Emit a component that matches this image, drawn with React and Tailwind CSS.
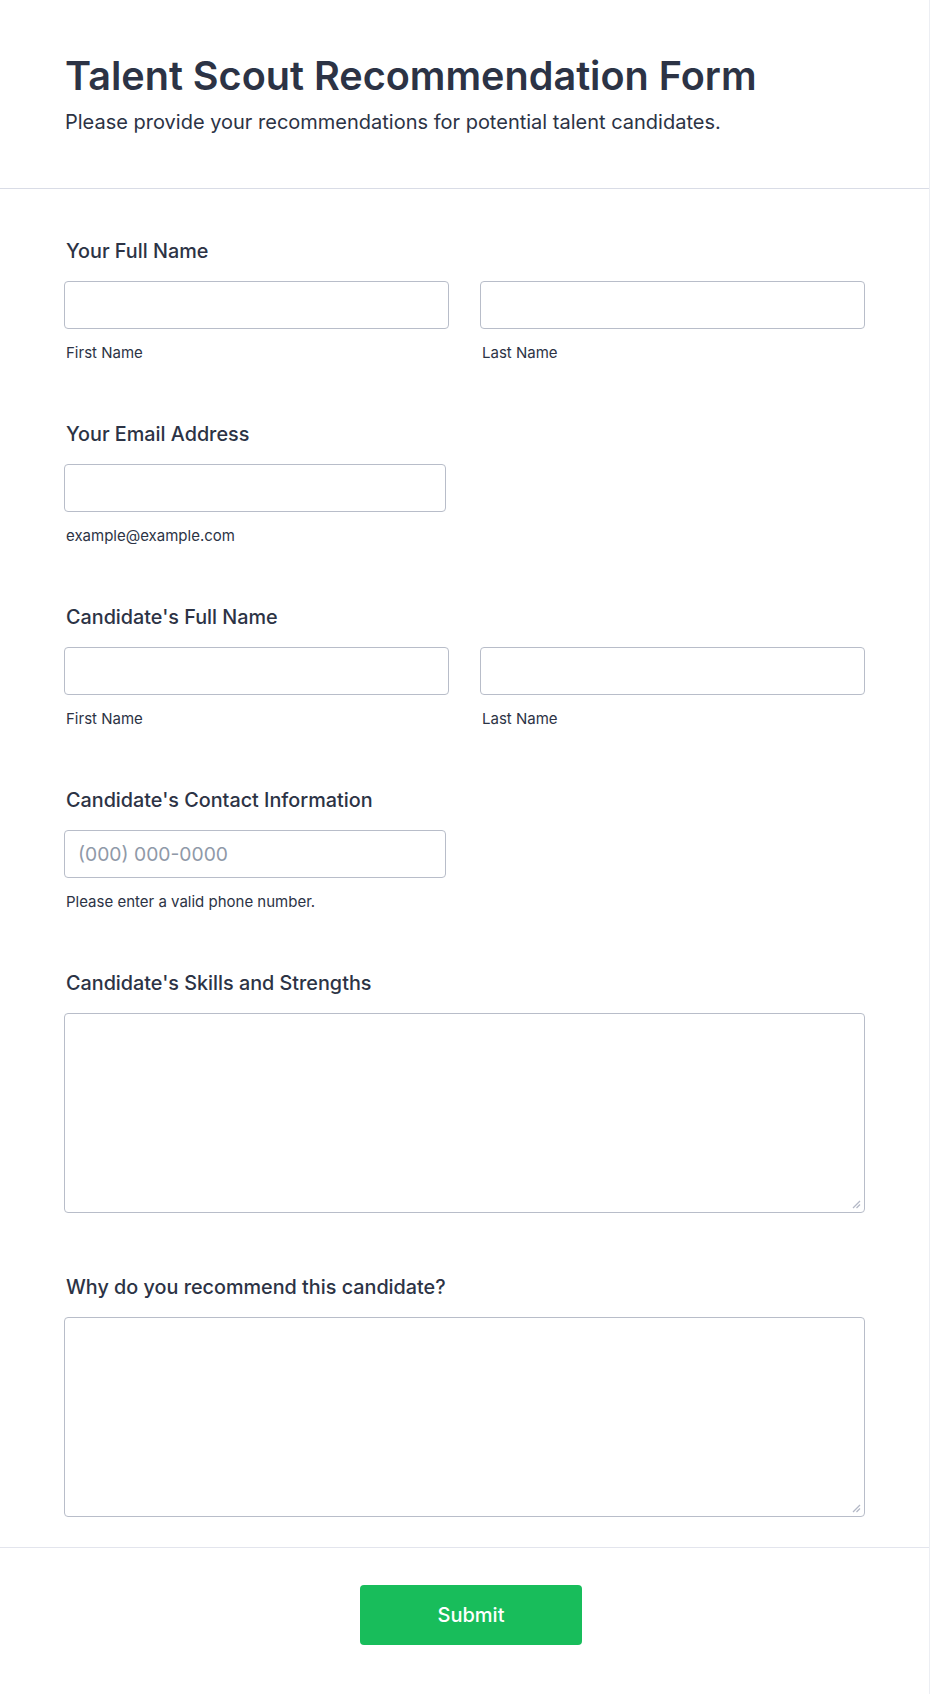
import React from "react";

const font = { fontFamily: "Inter, 'Noto Sans', sans-serif" };

function Label({ children }) {
  return (
    <div className="text-[19.8px] leading-[30px] font-medium text-[#2c3345] mb-[15px] pl-[2px]">
      {children}
    </div>
  );
}

function Caption({ children }) {
  return (
    <div className="mt-[14px] text-[15px] leading-[20px] text-[#2c3345] pl-[2px]">
      {children}
    </div>
  );
}

function TextInput({ placeholder, className = "" }) {
  return (
    <input
      type="text"
      placeholder={placeholder}
      className={
        "block h-[48px] rounded-[4px] border border-[#b8bdc9] bg-white px-[13px] text-[19.3px] text-[#2c3345] placeholder:text-[#8f99a8] outline-none " +
        className
      }
    />
  );
}

function Area() {
  return (
    <div className="relative w-[801px] h-[200px]">
      <textarea className="block w-[801px] h-[200px] rounded-[4px] border border-[#b8bdc9] bg-white px-[13px] py-[10px] text-[18px] text-[#2c3345] outline-none resize-none" />
      <svg
        className="absolute right-[4px] bottom-[4px]"
        width="10"
        height="10"
        viewBox="0 0 10 10"
      >
        <path d="M9 2 L2 9" stroke="#b3b8c6" strokeWidth="1.2" />
        <path d="M9 5.5 L5.5 9" stroke="#b3b8c6" strokeWidth="1.2" />
      </svg>
    </div>
  );
}

export default function App() {
  return (
    <div
      className="w-[930px] min-h-[1694px] bg-white border-r border-[#eceef3] flex flex-col"
      style={font}
    >
      <div className="px-[65px] pt-[52px] pb-[51px] border-b border-[#d9dce6]">
        <h1 className="text-[39.6px] leading-[48px] font-semibold text-[#2c3345]">
          Talent Scout Recommendation Form
        </h1>
        <p className="mt-[7px] text-[20px] leading-[30px] text-[#2c3345]">
          Please provide your recommendations for potential talent candidates.
        </p>
      </div>

      <div className="px-[64px] pt-[47px] pb-[30px] flex flex-col">
        <div className="mb-[56px]">
          <Label>Your Full Name</Label>
          <div className="grid grid-cols-[385px_385px] gap-x-[31px]">
            <div>
              <TextInput className="w-[385px]" />
              <Caption>First Name</Caption>
            </div>
            <div>
              <TextInput className="w-[385px]" />
              <Caption>Last Name</Caption>
            </div>
          </div>
        </div>

        <div className="mb-[56px]">
          <Label>Your Email Address</Label>
          <TextInput className="w-[382px]" />
          <Caption>example@example.com</Caption>
        </div>

        <div className="mb-[56px]">
          <Label>Candidate's Full Name</Label>
          <div className="grid grid-cols-[385px_385px] gap-x-[31px]">
            <div>
              <TextInput className="w-[385px]" />
              <Caption>First Name</Caption>
            </div>
            <div>
              <TextInput className="w-[385px]" />
              <Caption>Last Name</Caption>
            </div>
          </div>
        </div>

        <div className="mb-[56px]">
          <Label>Candidate's Contact Information</Label>
          <TextInput className="w-[382px]" placeholder="(000) 000-0000" />
          <Caption>Please enter a valid phone number.</Caption>
        </div>

        <div className="mb-[59px]">
          <Label>Candidate's Skills and Strengths</Label>
          <Area />
        </div>

        <div>
          <Label>Why do you recommend this candidate?</Label>
          <Area />
        </div>
      </div>

      <div className="border-t border-[#e3e5ed] pt-[37px] pb-[50px] flex">
        <button className="ml-[360px] w-[222px] h-[60px] rounded-[4px] bg-[#18bd5b] text-white text-[20px] font-medium">
          Submit
        </button>
      </div>
    </div>
  );
}
